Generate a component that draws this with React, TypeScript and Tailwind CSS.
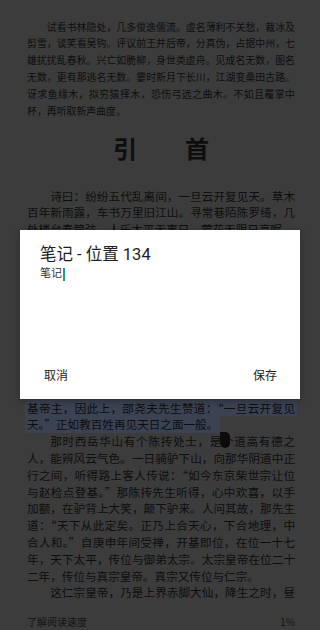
import React from "react";

const P1: string[] = [
  "试看书林隐处，几多俊逸儒流。虚名薄利不关愁，裁冰及",
  "剪雪，谈笑看吴钩。评议前王并后帝，分真伪，占据中州，七",
  "雄扰扰乱春秋。兴亡如脆柳，身世类虚舟。见成名无数，图名",
  "无数，更有那逃名无数。霎时新月下长川，江湖变桑田古路。",
  "讶求鱼缘木，拟穷猿择木，恐伤弓远之曲木。不如且覆掌中",
  "杯，再听取新声曲度。",
];

const P2: string[] = [
  "诗曰：纷纷五代乱离间，一旦云开复见天。草木",
  "百年新雨露，车书万里旧江山。寻常巷陌陈罗绮，几",
  "处楼台奏管弦。人乐太平无事日，莺花无限日高眠。",
];

type Line = { t: string; last?: boolean; indent?: boolean; hl?: "full" | "part" };

const BODY: Line[] = [
  { t: "基帝主，因此上，邵尧夫先生赞道：“一旦云开复见", hl: "full" },
  { t: "天。”正如教百姓再见天日之面一般。", last: true, hl: "part" },
  { t: "那时西岳华山有个陈抟处士，是个道高有德之", indent: true },
  { t: "人，能辨风云气色。一日骑驴下山，向那华阴道中正" },
  { t: "行之间，听得路上客人传说：“如今东京柴世宗让位" },
  { t: "与赵检点登基。”那陈抟先生听得，心中欢喜，以手" },
  { t: "加额，在驴背上大笑，颠下驴来。人问其故，那先生" },
  { t: "道：“天下从此定矣。正乃上合天心，下合地理，中" },
  { t: "合人和。”自庚申年间受禅，开基即位，在位一十七" },
  { t: "年，天下太平，传位与御弟太宗。太宗皇帝在位二十" },
  { t: "二年，传位与真宗皇帝。真宗又传位与仁宗。", last: true },
  { t: "这仁宗皇帝，乃是上界赤脚大仙，降生之时，昼", indent: true },
];

function JLine({ t, last, indent, className }: { t: string; last?: boolean; indent?: boolean; className?: string }) {
  return (
    <div
      className={
        "whitespace-nowrap " +
        (last ? "text-left " : "text-justify [text-align-last:justify] ") +
        (indent ? "indent-[2em] " : "") +
        (className ?? "")
      }
    >
      {t}
    </div>
  );
}

export default function App() {
  return (
    <div
      className="relative w-[320px] h-[630px] overflow-hidden bg-[#3c3c3c] text-[#0e0e0e]"
      style={{ fontFamily: "'Noto Sans CJK SC', sans-serif" }}
    >
      <div className="pl-[27px] pr-[25px] pt-[18.6px]">
        <div className="text-[9.9px] leading-[16.8px]">
          {P1.map((t, i) => (
            <JLine key={i} t={t} indent={i === 0} last={i === P1.length - 1} />
          ))}
        </div>

        <div className="mt-[13.6px] h-[30px] flex items-center justify-center gap-[48px] text-[24px] font-bold leading-[30px]">
          <span>引</span>
          <span>首</span>
        </div>

        <div className="mt-[24.6px] text-[11.6px] leading-[16.8px]">
          {P2.map((t, i) => (
            <JLine key={i} t={t} indent={i === 0} last={i === P2.length - 1} />
          ))}
          {/* text hidden beneath the dialog */}
          <div className="h-[161.6px]" />
          {BODY.map((l, i) =>
            l.hl === "full" ? (
              <div key={i} className="bg-[#3b4352] -mx-[2px] px-[2px]">
                <JLine t={l.t} />
              </div>
            ) : l.hl === "part" ? (
              <div key={i} className="whitespace-nowrap">
                <span className="bg-[#3b4352] -ml-[2px] pl-[2px] pr-[2px] inline-block">{l.t}</span>
              </div>
            ) : (
              <JLine key={i} t={l.t} last={l.last} indent={l.indent} />
            )
          )}
        </div>

        <div className="mt-[13.8px] flex justify-between text-[10px] leading-[14px] text-[#141414]">
          <span>了解阅读速度</span>
          <span>1%</span>
        </div>
      </div>

      {/* selection handle */}
      <svg className="absolute left-[220px] top-[432px]" width="10" height="16" viewBox="0 0 10 16">
        <path d="M0 0 H5 A5 5 0 0 1 10 5 V11 A5 5 0 0 1 5 16 A5 5 0 0 1 0 11 Z" fill="#0b0b0b" />
      </svg>

      {/* dialog */}
      <div
        className="absolute left-[20px] top-[230px] w-[280px] h-[169px] bg-white flex flex-col shadow-[0_2px_8px_rgba(0,0,0,0.3)]"
        style={{ fontFamily: "Roboto, 'Noto Sans CJK SC', sans-serif" }}
      >
        <div className="pt-[15px] px-[20px] text-[16.5px] leading-[20px] text-[#1e1e1e]">笔记 - 位置 134</div>
        <div className="mt-[2px] px-[20px] flex items-center h-[14px]">
          <span className="text-[11px] leading-[14px] text-[#333333]">笔记</span>
          <span className="ml-[0.5px] w-[2px] h-[13px] bg-[#14a38f]" />
        </div>
        <div className="flex-1" />
        <div className="flex justify-between pl-[24px] pr-[23px] pb-[15px] text-[12px] leading-[16px] text-[#222222]">
          <span>取消</span>
          <span>保存</span>
        </div>
      </div>
    </div>
  );
}
